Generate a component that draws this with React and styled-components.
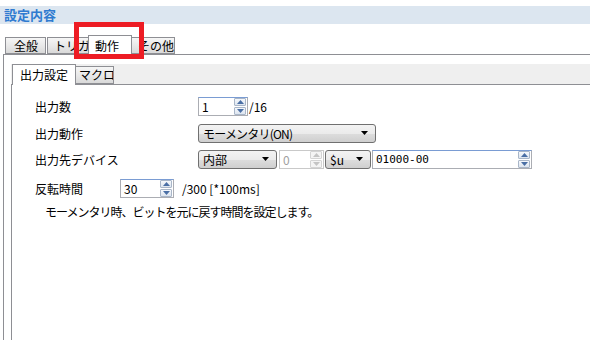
import React from "react";
import styled, { createGlobalStyle } from "styled-components";

const Global = createGlobalStyle`
  html, body {
    margin: 0;
    padding: 0;
    background: #fff;
  }
  body {
    font-family: "Noto Sans CJK JP", "Liberation Sans", sans-serif;
    font-size: 12px;
    color: #000;
  }
`;

const Page = styled.div`
  position: relative;
  width: 590px;
  height: 340px;
  overflow: hidden;
  display: flex;
  flex-direction: column;
`;

const Header = styled.div`
  margin-top: 6px;
  height: 18px;
  line-height: 18px;
  background: #dce6f0;
  color: #2f7bd0;
  font-weight: bold;
  font-size: 13px;
  padding-left: 4px;
`;

const TabStrip = styled.div`
  display: flex;
  align-items: flex-end;
  height: ${(p) => p.$h}px;
  margin-top: ${(p) => p.$mt || 0}px;
  margin-left: ${(p) => p.$ml || 0}px;
  padding-left: ${(p) => p.$pl || 0}px;
  border-bottom: 1px solid #8e8f94;
  background: ${(p) => p.$bg || "transparent"};
`;

const Tab = styled.div`
  box-sizing: border-box;
  width: ${(p) => p.$w}px;
  height: ${(p) => (p.$active ? p.$h + 3 : p.$h)}px;
  margin-bottom: ${(p) => (p.$active ? -1 : 0)}px;
  margin-left: ${(p) => p.$ml || 0}px;
  border: 1px solid #8e8f94;
  border-bottom: ${(p) => (p.$active ? "none" : "1px solid #8e8f94")};
  background: ${(p) =>
    p.$active ? "#fff" : "linear-gradient(#f6f6f6, #e6e6e6 60%, #d9d9d9)"};
  padding-left: ${(p) => p.$pl || 6}px;
  padding-top: ${(p) => (p.$active ? 2 : 0)}px;
  line-height: ${(p) => p.$h - 2}px;
  white-space: nowrap;
  overflow: hidden;
  position: relative;
  z-index: ${(p) => (p.$active ? 2 : 1)};
`;

const Panel = styled.div`
  flex: 1;
  margin-left: ${(p) => p.$ml}px;
  border-left: 1px solid #8e8f94;
  padding-top: ${(p) => p.$pt || 0}px;
  display: flex;
  flex-direction: column;
`;

const InnerTabs = styled.div`
  flex: 1;
  margin-left: 7px;
  display: flex;
  flex-direction: column;
`;

const Form = styled.div`
  flex: 1;
  border-left: 1px solid #8e8f94;
  padding-left: 23px;
  padding-top: 11px;
  display: flex;
  flex-direction: column;
`;

const Row = styled.div`
  display: flex;
  align-items: center;
  height: 20px;
  margin-top: ${(p) => p.$mt || 0}px;
`;

const Label = styled.div`
  width: ${(p) => p.$w}px;
  flex-shrink: 0;
`;

const SpinWrap = styled.div`
  box-sizing: border-box;
  width: ${(p) => p.$w}px;
  height: 19px;
  display: flex;
  align-items: center;
  border: 1px solid ${(p) => (p.$disabled ? "#c9c9c9" : "#abadb3")};
  border-top-color: ${(p) => (p.$disabled ? "#c9c9c9" : "#7a9cd3")};
  background: #fff;
  margin-right: ${(p) => p.$mr || 0}px;
`;

const SpinValue = styled.div`
  flex: 1;
  padding-left: 3px;
  color: ${(p) => (p.$disabled ? "#a0a0a0" : "#000")};
  font-family: ${(p) =>
    p.$mono ? '"DejaVu Sans Mono", monospace' : "inherit"};
  font-size: ${(p) => (p.$mono ? 11 : 12)}px;
`;

const SpinButtons = styled.div`
  width: 12px;
  height: 17px;
  display: flex;
  flex-direction: column;
  gap: 1px;
  margin-right: 1px;
`;

const SpinBtn = styled.div`
  flex: 1;
  border: 1px solid ${(p) => (p.$disabled ? "#d4d4d4" : "#a9b6c8")};
  border-radius: 1px;
  background: ${(p) =>
    p.$disabled ? "#f4f4f4" : "linear-gradient(#f5f8fc, #dde5ef)"};
  display: flex;
  align-items: center;
  justify-content: center;
`;

const Select = styled.div`
  box-sizing: border-box;
  width: ${(p) => p.$w}px;
  height: 19px;
  border: 1px solid #707070;
  border-radius: 3px;
  background: linear-gradient(#f3f3f3, #ebebeb 50%, #dddddd 51%, #cfcfcf);
  display: flex;
  align-items: center;
  padding: 0 7px 0 4px;
  margin-right: ${(p) => p.$mr || 0}px;
  white-space: nowrap;
`;

const SelectText = styled.div`
  flex: 1;
  letter-spacing: ${(p) => (p.$tight ? "-0.8px" : "0")};
`;

const Unit = styled.div`
  margin-left: ${(p) => p.$ml || 0}px;
`;

const Desc = styled.div`
  margin-top: 6px;
  margin-left: 10px;
  height: 16px;
  line-height: 16px;
  letter-spacing: -1px;
`;

const Highlight = styled.div`
  position: absolute;
  left: 74px;
  top: 22px;
  width: 70px;
  height: 37px;
  box-sizing: border-box;
  border: 5px solid #ed1c24;
  z-index: 5;
`;

const Arrow = ({ up, color = "#4a6fa5" }) => (
  <svg width="7" height="4" viewBox="0 0 7 4">
    <path d={up ? "M0 4 L3.5 0 L7 4 Z" : "M0 0 L3.5 4 L7 0 Z"} fill={color} />
  </svg>
);

const DropArrow = () => (
  <svg width="7" height="4" viewBox="0 0 7 4">
    <path d="M0 0 L7 0 L3.5 4 Z" fill="#000" />
  </svg>
);

const Spin = ({ w, value, disabled, mono, mr }) => (
  <SpinWrap $w={w} $disabled={disabled} $mr={mr}>
    <SpinValue $disabled={disabled} $mono={mono}>
      {value}
    </SpinValue>
    <SpinButtons>
      <SpinBtn $disabled={disabled}>
        <Arrow up color={disabled ? "#c4c4c4" : "#4a6fa5"} />
      </SpinBtn>
      <SpinBtn $disabled={disabled}>
        <Arrow color={disabled ? "#c4c4c4" : "#4a6fa5"} />
      </SpinBtn>
    </SpinButtons>
  </SpinWrap>
);

const Dropdown = ({ w, value, mr, tight }) => (
  <Select $w={w} $mr={mr}>
    <SelectText $tight={tight}>{value}</SelectText>
    <DropArrow />
  </Select>
);

export default function App() {
  return (
    <Page>
      <Global />
      <Header>設定内容</Header>
      <TabStrip $h={20} $mt={10} $pl={1} $ml={3}>
        <Tab $w={41} $h={17} $ml={1} $pl={8}>全般</Tab>
        <Tab $w={42} $h={17} $ml={1} $pl={6}>トリガ</Tab>
        <Tab $w={44} $h={17} $active $ml={-1} $pl={6}>動作</Tab>
        <Tab $w={44} $h={17} $ml={-1} $pl={6}>その他</Tab>
      </TabStrip>
      <Panel $ml={3} $pt={9}>
        <InnerTabs>
          <TabStrip $h={20} $bg="#efefef">
            <Tab $w={64} $h={18} $active $ml={1} $pl={7}>出力設定</Tab>
            <Tab $w={39} $h={18} $ml={-1} $pl={3}>マクロ</Tab>
          </TabStrip>
          <Form>
            <Row>
              <Label $w={163}>出力数</Label>
              <Spin w={50} value="1" />
              <Unit $ml={1}>/16</Unit>
            </Row>
            <Row $mt={7}>
              <Label $w={163}>出力動作</Label>
              <Dropdown w={178} value="モーメンタリ(ON)" tight />
            </Row>
            <Row $mt={6}>
              <Label $w={163}>出力先デバイス</Label>
              <Dropdown w={79} value="内部" mr={2} />
              <Spin w={45} value="0" disabled mr={1} />
              <Dropdown w={46} value="$u" mr={1} />
              <Spin w={160} value="01000-00" mono />
            </Row>
            <Row $mt={9}>
              <Label $w={85}>反転時間</Label>
              <Spin w={54} value="30" />
              <Unit $ml={8}>/300 [*100ms]</Unit>
            </Row>
            <Desc>モーメンタリ時、ビットを元に戻す時間を設定します。</Desc>
          </Form>
        </InnerTabs>
      </Panel>
      <Highlight />
    </Page>
  );
}
